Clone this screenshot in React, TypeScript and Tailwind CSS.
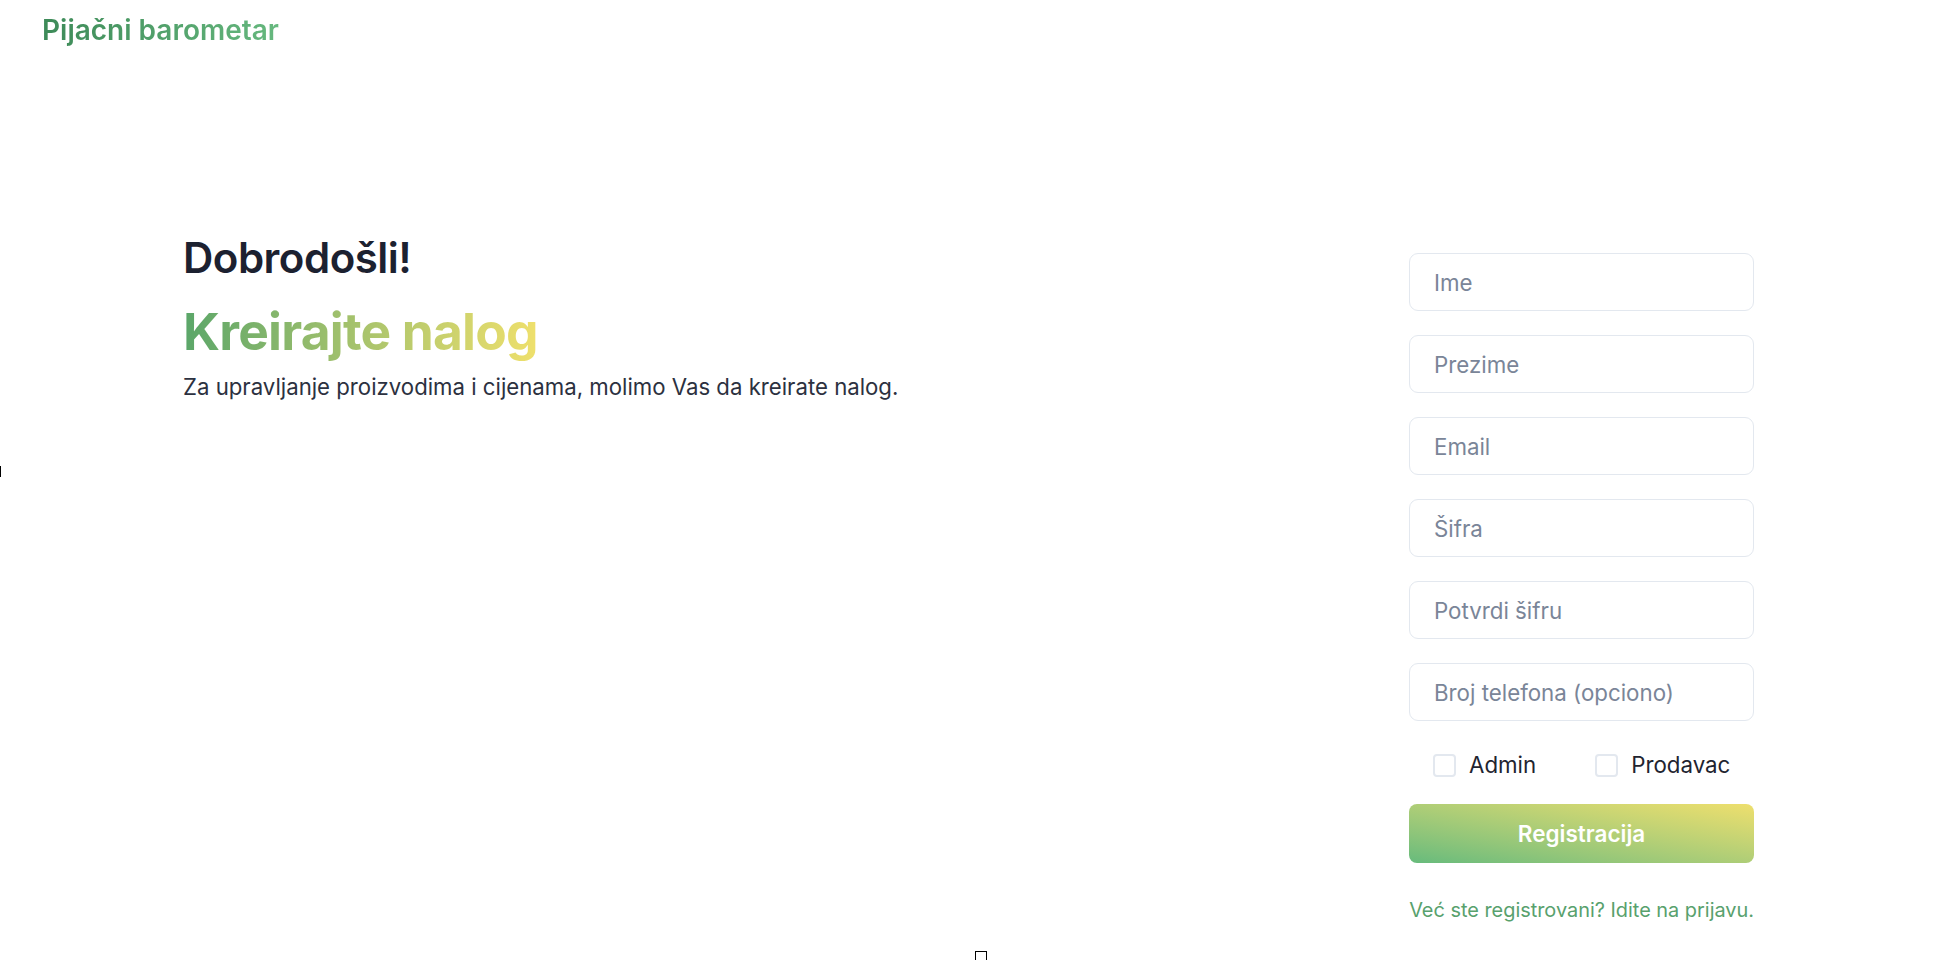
import React from "react";

const fields = ["Ime", "Prezime", "Email", "Šifra", "Potvrdi šifru", "Broj telefona (opciono)"];

export default function App() {
  return (
    <div className="relative min-h-[960px] bg-white font-['Inter','Liberation_Sans',sans-serif]">
      <header className="px-[42px] pt-[10px]">
        <span className="bg-gradient-to-r from-[#3d8a58] to-[#66b87e] bg-clip-text text-[28px] font-semibold leading-[40px] text-transparent">
          Pijačni barometar
        </span>
      </header>
      <main className="flex justify-between pl-[183px] pr-[198px] pt-[180px]">
        <div>
          <h1 className="text-[42px] font-semibold leading-[56px] tracking-[-0.5px] text-[#1c2130]">Dobrodošli!</h1>
          <h2 className="mt-[13px] inline-block bg-gradient-to-r from-[#5aa669] to-[#efe06c] bg-clip-text text-[51.5px] font-bold leading-[64px] tracking-[-0.8px] text-transparent">
            Kreirajte nalog
          </h2>
          <p className="mt-[9px] text-[22.2px] leading-[30px] text-[#2c3140]">
            Za upravljanje proizvodima i cijenama, molimo Vas da kreirate nalog.
          </p>
        </div>
        <form className="flex w-[345px] flex-col pt-[23px]" onSubmit={e => e.preventDefault()}>
          <div className="flex flex-col gap-[24px]">
            {fields.map(f => (
              <input
                key={f}
                type="text"
                placeholder={f}
                className="h-[58px] w-full rounded-[9px] border border-[#e3e8ef] px-[24px] text-[22.3px] text-[#1f2937] outline-none placeholder:text-[#7a8598]"
              />
            ))}
          </div>
          <div className="mt-[29px] flex items-center pl-[24px] text-[22.3px] leading-[30px] text-[#1f2430]">
            <label className="flex items-center gap-[13px]">
              <span className="h-[23px] w-[23px] rounded-[4px] border-2 border-[#e3e8ef]" />
              Admin
            </label>
            <label className="ml-[59px] flex items-center gap-[13px]">
              <span className="h-[23px] w-[23px] rounded-[4px] border-2 border-[#e3e8ef]" />
              Prodavac
            </label>
          </div>
          <button
            type="submit"
            className="mt-[24px] h-[59px] w-full rounded-[8px] bg-gradient-to-tr from-[#66bb7c] to-[#eedf6d] text-[22.5px] font-semibold text-white"
          >
            Registracija
          </button>
          <a href="#" className="mt-[35px] self-end whitespace-nowrap text-[19.9px] leading-[24px] text-[#58a16d]">
            Već ste registrovani? Idite na prijavu.
          </a>
        </form>
      </main>
      <div className="absolute left-0 top-[466px] h-[11px] w-[1px] bg-black" />
      <div className="absolute left-[975px] top-[951px] h-[9px] w-[12px] border-x border-t border-black" />
    </div>
  );
}
